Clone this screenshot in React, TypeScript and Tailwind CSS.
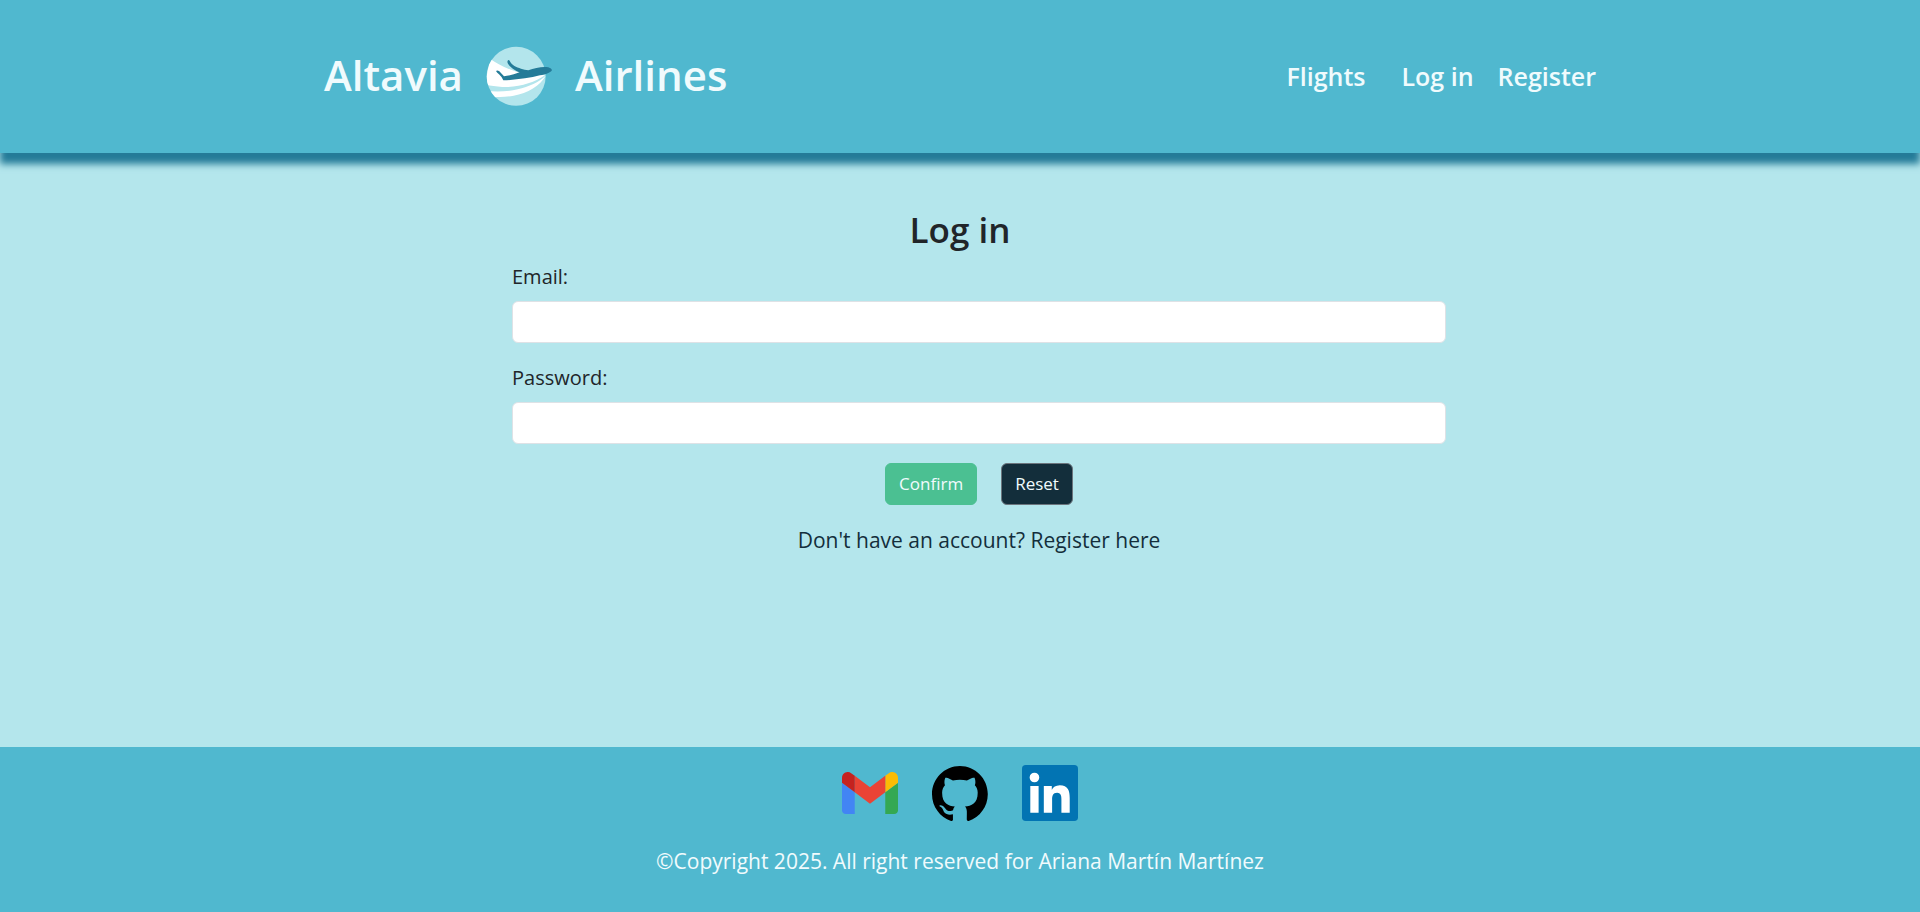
function PlaneLogo() {
  return (
    <svg viewBox="30 30 204 183" className="h-[61px] w-[68px]" aria-hidden="true">
      <defs>
        <clipPath id="globe">
          <circle cx="123.5" cy="121" r="88.5" />
        </clipPath>
      </defs>
      <circle cx="123.5" cy="121" r="88.5" fill="#b3e5ec" />
      <g clipPath="url(#globe)" fill="#fff">
        <path d="M45 68C66 84 98 99 135 111L210 118C178 140 130 155 82 153C62 152 45 149 30 146Z" />
        <path d="M30 164C60 168 96 167 128 160C162 152 192 138 212 119C196 149 158 171 116 179C90 184 72 184 50 182Z" />
      </g>
      <path
        d="M63 105Q67 102 73 106L87 121C101 120 118 115 134 109C122 104 106 95 99 83Q95 75 100 72Q104 72 106 78C110 87 124 94 138 98Q149 102 160 103C180 95 204 91 220 94Q230 97 231 102C228 110 212 115 195 118C164 126 124 132 85 133Q81 123 72 115Q66 110 63 105Z"
        fill="#247b98"
      />
    </svg>
  );
}

function GmailIcon() {
  return (
    <svg viewBox="52 42 88 66" className="h-[42px] w-14" aria-hidden="true">
      <path fill="#4285f4" d="M58 108h14V74L52 59v43c0 3.32 2.69 6 6 6" />
      <path fill="#34a853" d="M120 108h14c3.32 0 6-2.69 6-6V59l-20 15" />
      <path fill="#fbbc04" d="M120 48v26l20-15v-8c0-7.42-8.47-11.65-14.4-7.2" />
      <path fill="#ea4335" d="M72 74V48l24 18 24-18v26L96 92" />
      <path fill="#c5221f" d="M52 51v8l20 15V48l-5.6-4.2c-5.94-4.45-14.4-.22-14.4 7.2" />
    </svg>
  );
}

function GithubIcon() {
  return (
    <svg viewBox="0 0 98 96" className="h-[55px] w-14" aria-hidden="true">
      <path
        fillRule="evenodd"
        clipRule="evenodd"
        d="M48.854 0C21.839 0 0 22 0 49.217c0 21.756 13.993 40.172 33.405 46.69 2.427.49 3.316-1.059 3.316-2.362 0-1.141-.08-5.052-.08-9.127-13.59 2.934-16.42-5.867-16.42-5.867-2.184-5.704-5.42-7.17-5.42-7.17-4.448-3.015.324-3.015.324-3.015 4.934.326 7.523 5.052 7.523 5.052 4.367 7.496 11.404 5.378 14.235 4.074.404-3.178 1.699-5.378 3.074-6.6-10.839-1.141-22.243-5.378-22.243-24.283 0-5.378 1.94-9.778 5.014-13.2-.485-1.222-2.184-6.275.486-13.038 0 0 4.125-1.304 13.426 5.052a46.97 46.97 0 0 1 12.214-1.63c4.125 0 8.33.571 12.213 1.63 9.302-6.356 13.427-5.052 13.427-5.052 2.67 6.763.97 11.816.485 13.038 3.155 3.422 5.015 7.822 5.015 13.2 0 18.905-11.404 23.06-22.324 24.283 1.78 1.548 3.316 4.481 3.316 9.126 0 6.6-.08 11.897-.08 13.526 0 1.304.89 2.853 3.316 2.364 19.412-6.52 33.405-24.935 33.405-46.691C97.707 22 75.788 0 48.854 0z"
      />
    </svg>
  );
}

function LinkedinIcon() {
  return (
    <svg viewBox="0 0 24 24" className="size-14" aria-hidden="true">
      <rect width="24" height="24" rx="1.6" fill="#0274b3" />
      <path
        fill="#fff"
        d="M20.447 20.452h-3.554v-5.569c0-1.328-.027-3.037-1.852-3.037-1.853 0-2.136 1.445-2.136 2.939v5.667H9.351V9h3.414v1.561h.046c.477-.9 1.637-1.85 3.37-1.85 3.601 0 4.267 2.37 4.267 5.455v6.286zM5.337 7.433a2.062 2.062 0 0 1-2.063-2.065 2.064 2.064 0 1 1 2.063 2.065zm1.782 13.019H3.555V9h3.564v11.452z"
      />
    </svg>
  );
}

const labelClass = "block text-[20px] leading-8";
const inputClass =
  "mt-2 block h-[42px] w-full rounded-md border border-[#dee2e6] bg-white px-3 text-lg";
const buttonClass = "h-[42px] rounded-md border px-[13px] text-[17px] text-[#f0fbfd]";

export default function App() {
  return (
    <div className="flex min-h-screen flex-col bg-[#b4e6ec] font-['Open_Sans','Noto_Sans',sans-serif] text-[#212529]">
      <header className="bg-[#50b8cf] py-[46px] text-[#f0fbfd] shadow-[0_11px_7px_#247b98]">
        <div className="mx-auto flex max-w-[1320px] flex-wrap items-center justify-between px-6">
          <a href="#home" className="flex items-center gap-[22px] text-[42px] leading-[57px] font-semibold">
            <span className="pb-1">Altavia</span>
            <PlaneLogo />
            <span className="pb-1">Airlines</span>
          </a>
          <nav className="flex items-center gap-6 text-[25px] font-semibold">
            <a href="#flights" className="mr-3">Flights</a>
            <a href="#login">Log in</a>
            <a href="#register">Register</a>
          </nav>
        </div>
      </header>

      <main className="flex-1 px-6 pt-[53px] pb-8">
        <h1 className="text-center text-[35px] leading-12 font-semibold">Log in</h1>
        <div className="pl-[38px]">
          <form className="mx-auto max-w-[934px]">
            <div className="pt-[7px]">
              <label htmlFor="email" className={labelClass}>Email:</label>
              <input id="email" type="email" className={inputClass} />
            </div>
            <div className="pt-[19px]">
              <label htmlFor="password" className={labelClass}>Password:</label>
              <input id="password" type="password" className={inputClass} />
            </div>
            <div className="mt-[19px] flex justify-center gap-6">
              <button type="submit" className={`${buttonClass} border-[#4bc092] bg-[#4bc092]`}>
                Confirm
              </button>
              <button type="reset" className={`${buttonClass} border-[#6c757d] bg-[#132e3b]`}>
                Reset
              </button>
            </div>
            <p className="mt-[19px] text-center text-[21px] leading-8 text-[#132e3b]">
              Don't have an account? <a href="#register">Register here</a>
            </p>
          </form>
        </div>
      </main>

      <footer className="bg-[#50b8cf] pt-[18px] pb-[35px] text-[#f0fbfd]">
        <div className="flex items-center justify-center gap-[34px]">
          <a href="#mail" aria-label="Gmail"><GmailIcon /></a>
          <a href="#github" aria-label="GitHub" className="text-black"><GithubIcon /></a>
          <a href="#linkedin" aria-label="LinkedIn"><LinkedinIcon /></a>
        </div>
        <p className="mt-6 text-center text-[21px] leading-8">
          ©Copyright 2025. All right reserved for Ariana Martín Martínez
        </p>
      </footer>
    </div>
  );
}
